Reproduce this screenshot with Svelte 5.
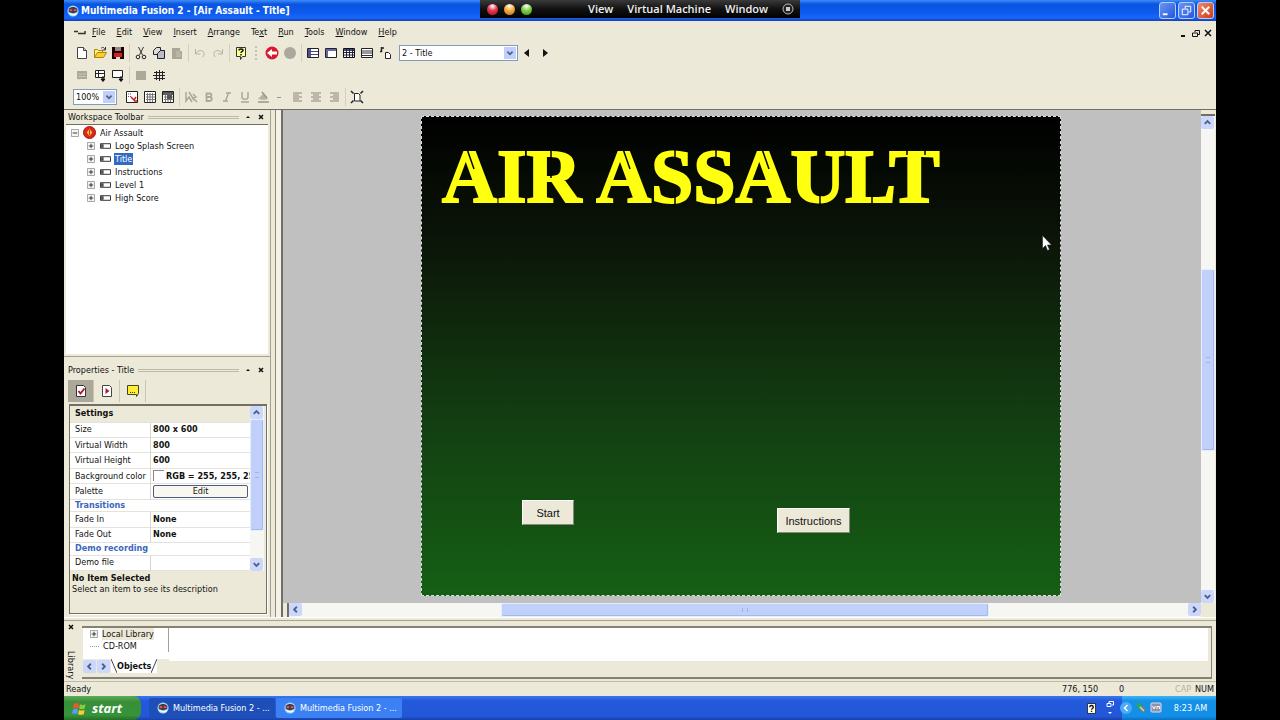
<script>
    let frameChoice = $state("2 - Title")
    let zoom = $state("100%")
    let selected = $state("Title")

    const menus = [
        ["", "F", "ile"], ["", "E", "dit"], ["", "V", "iew"], ["", "I", "nsert"], ["", "A", "rrange"],
        ["Te", "x", "t"], ["", "R", "un"], ["", "T", "ools"], ["", "W", "indow"], ["", "H", "elp"],
    ]

    const frames = ["Logo Splash Screen", "Title", "Instructions", "Level 1", "High Score"]

    // svg bodies, all drawn on a 14 x 14 grid
    const icons = {
        new: `<path d="M2.5 1.5h6l3 3v8h-9z" fill="#fff" stroke="#444"/><path d="M8.500 1.500v3h3" fill="#ccd" stroke="#444"/>`,
        open: `<path d="M1.500 11.500v-8h3l1 1h4v2" fill="#fe8" stroke="#a80"/><path d="M1.500 11.500l3-5h9l-3 5z" fill="#fc3" stroke="#a80"/><path d="M8 2.500c2-2 3-1 4 1M12.500 1v3h-3" fill="none" stroke="#333"/>`,
        save: `<path d="M1 1h12v12H1z" fill="#200"/><path d="M3 7h8v4H3z" fill="#c22"/><path d="M4 1h6v4H4z" fill="#988"/><path d="M5 11h4v2H5z" fill="#ddd"/>`,
        cut: `<path d="M4.500 1l4 8M9.500 1l-4 8" fill="none" stroke="#333"/><circle cx="4" cy="11" r="1.800" fill="none" stroke="#222"/><circle cx="10" cy="11" r="1.800" fill="none" stroke="#222"/>`,
        copy: `<path d="M1.500 4.500l3-3h4v7h-7z" fill="#ddd" stroke="#222"/><path d="M5.500 7.500l3-3h4v8h-7z" fill="#bbc" stroke="#222"/>`,
        paste: `<path d="M2 2h8v3h2v8H2z" fill="#a8a798"/><path d="M6 6h4M6 8h5M6 10h5" stroke="#c8c6b5"/>`,
        undo: `<path d="M2.500 3v5h5M3 7c3-4 9-3 8 2l-1 2" fill="none" stroke="#b6b4a4"/>`,
        redo: `<path d="M11.500 3v5h-5M11 7c-3-4-9-3-8 2l1 2" fill="none" stroke="#b6b4a4"/>`,
        help: `<path d="M2.500 1.500h9v9h-3l-2 3v-3h-4z" fill="#ff9" stroke="#333"/><path d="M5 4.500c0-2 4-2 4 0 0 1-2 1-2 2.500M7 8v1.500" fill="none" stroke="#111" stroke-width="1.500"/>`,
        back: `<circle cx="7" cy="7" r="6.500" fill="#d8192d"/><path d="M2 7l5-4v2.500h5v3H7V11z" fill="#fff"/>`,
        stop: `<circle cx="7" cy="7" r="6" fill="#aaa99c"/>`,
        story: `<path d="M1.500 2.500h11v9h-11z" fill="#fff" stroke="#222"/><path d="M2 3h3v8H2z" fill="#559"/><path d="M2 5.500h10M2 8.500h10" stroke="#448"/>`,
        frame: `<path d="M1.500 2.500h11v9h-11z" fill="#fff" stroke="#222"/><path d="M2 4h10M3 4v7" stroke="#66a" stroke-width="2"/>`,
        events: `<path d="M1.500 2.500h11v9h-11z" fill="#fff" stroke="#111"/><path d="M2 3h10v2H2z" fill="#448"/><path d="M2 6.500h10M2 9h10M4.500 3v8M7.500 3v8M10.500 3v8" stroke="#223"/>`,
        list: `<path d="M1.500 2.500h11v9h-11z" fill="#fff" stroke="#222"/><path d="M2 5h10M2 7h10M2 9.500h10" stroke="#333"/>`,
        data: `<path d="M3.500 1v5M3 2h3M2 5.500h2" fill="none" stroke="#222" stroke-width="1.500"/><path d="M7.500 6.500h3l2 2v4h-5z" fill="#fff" stroke="#222"/>`,
        prev: `<path d="M9 3v8L4 7z" fill="#111"/>`,
        next: `<path d="M5 3v8l5-4z" fill="#111"/>`,
        block: `<path d="M2 3h10v9H2z" fill="#aaa99a"/>`,
        dimlist: `<path d="M2 3h10v8H2z" fill="#aaa99a"/><path d="M4 11v1M3 6h8M3 8.500h8" stroke="#c8c6b5"/>`,
        insertrow: `<path d="M2.500 2.500h9v7h-9zM2.500 5.500h9M5.500 2.500v7" fill="#fff" stroke="#222"/><path d="M10 8v5M8 11h4l-2 2.500z" fill="#111" stroke="#111"/>`,
        insertbox: `<path d="M1.500 2.500h10v7h-10z" fill="#fff" stroke="#222"/><path d="M10 8v5M8 11h4l-2 2.500z" fill="#111" stroke="#111"/>`,
        grid: `<path d="M2 4.500h11M1 7.500h12M2 10.500h11M4.500 3v9M7.500 2v11M10.500 3v9" stroke="#222"/>`,
        snap: `<path d="M1.500 1.500h11v11h-11z" fill="#fff" stroke="#222"/><path d="M3 4h4M3 6.500h3" stroke="#555" stroke-dasharray="1 1"/><path d="M6 7l3 3 2-3M9 11h3" fill="none" stroke="#c22" stroke-width="1.500"/>`,
        gridon: `<path d="M1.500 1.500h11v11h-11z" fill="#fff" stroke="#222"/><path d="M3 4.500h9M3 7h9M3 9.500h9M4.500 3v9M7 3v9M9.500 3v9" stroke="#777"/>`,
        gridset: `<path d="M1.500 1.500h11v11h-11z" fill="#fff" stroke="#222"/><path d="M2 2h10v3H2z" fill="#555"/><path d="M3 7h9M3 9.500h9M4.500 3v9M7 3v9M9.500 3v9" stroke="#777"/><path d="M6 5h5v4H6z" fill="#555"/>`,
        font: `<path d="M2 2v9l3-4 3 5M5 2l5 8M9 4l3 3-3 1 4 4" fill="none" stroke="#aaa89a" stroke-width="1.500"/>`,
        bold: `<path d="M4.500 3.500h3c2.500 0 2.500 3 .5 3.500 3 .5 2 4-.5 4h-3zM4.500 7H8" fill="none" stroke="#aaa89a" stroke-width="1.800"/>`,
        italic: `<path d="M6 3h5M3 11h5M8.500 3l-3 8" fill="none" stroke="#aaa89a" stroke-width="1.500"/>`,
        underline: `<path d="M4 2v5c0 3 6 3 6 0V2M3 12h8" fill="none" stroke="#aaa89a" stroke-width="1.500"/>`,
        color: `<path d="M2 9l5-5 5 5-4 1z" fill="#b4b2a3"/><path d="M6 2l5 6M2 12h11" fill="none" stroke="#999789" stroke-width="1.500"/>`,
        left: `<path d="M2 3h9M2 5h6M2 7h9M2 9h6M2 11h9" stroke="#aaa89a" stroke-width="1.500"/>`,
        center: `<path d="M2 3h10M4 5h6M2 7h10M4 9h6M2 11h10" stroke="#aaa89a" stroke-width="1.500"/>`,
        right: `<path d="M3 3h9M6 5h6M3 7h9M6 9h6M3 11h9" stroke="#aaa89a" stroke-width="1.500"/>`,
        fit: `<path d="M4.500 3.500h4l1.500 1.500v6h-5.500z" fill="#fff" stroke="#222"/><path d="M1 1l2.500 2.500M13 1l-2.500 2.500M1 13l2.500-2.500M13 13l-2.500-2.500" stroke="#222" stroke-width="1.500"/>`,
        check: `<path d="M2.500 1.500h7l2 2v9h-9z" fill="#fff" stroke="#333"/><path d="M4.500 7l2 2.500 4-5" fill="none" stroke="#b0182b" stroke-width="2"/>`,
        run: `<path d="M2.500 1.500h7l2 2v9h-9z" fill="#fff" stroke="#444"/><path d="M5.500 4v6l4-3z" fill="#b0182b"/>`,
        note: `<path d="M1.500 1.500h11v8l-2 3v-2h-9z" fill="#ffee32" stroke="#443"/><path d="M4 8.500h6" stroke="#333" stroke-dasharray="1 1"/>`,
    }

    const row1 = [
        [["new", "New"], ["open", "Open"], ["save", "Save"]],
        [["cut", "Cut"], ["copy", "Copy"], ["paste", "Paste"]],
        [["undo", "Undo"], ["redo", "Redo"]],
        [["help", "Contents"]],
    ]
    const navigation = [
        [["back", "Back"], ["stop", "Stop"]],
        [["story", "Storyboard Editor"], ["frame", "Frame Editor"], ["events", "Event Editor"], ["list", "Event List Editor"], ["data", "Data Elements"]],
    ]
    const row2 = [
        [["dimlist", "Event"], ["insertrow", "Insert row"], ["insertbox", "Insert frame"]],
        [["block", "Color"], ["grid", "Grid"]],
    ]
    const row3 = [
        [["snap", "Grid setup"], ["gridon", "Show grid"], ["gridset", "Snap to grid"]],
        [["font", "Font"], ["bold", "Bold"], ["italic", "Italic"], ["underline", "Underline"], ["color", "Color"]],
    ]
    const align = [
        [["left", "Left"], ["center", "Center"], ["right", "Right"]],
        [["fit", "Center frame"]],
    ]

    const properties = [
        { name: "Size", value: "800 x 600" },
        { name: "Virtual Width", value: "800" },
        { name: "Virtual Height", value: "600" },
        { name: "Background color", value: "RGB = 255, 255, 255", swatch: true },
        { name: "Palette", button: "Edit" },
        { section: "Transitions" },
        { name: "Fade In", value: "None" },
        { name: "Fade Out", value: "None" },
        { section: "Demo recording" },
        { name: "Demo file", value: "" },
    ]
</script>

{#snippet icon(name)}
    <svg class="icon" viewBox="0 0 14 14" aria-hidden="true">{@html icons[name]}</svg>
{/snippet}

{#snippet tools(groups)}
    {#each groups as group}
        <div class="group">
            {#each group as [name, label]}
                <button class="tool" aria-label={label}>{@render icon(name)}</button>
            {/each}
        </div>
    {/each}
{/snippet}

{#snippet arrow(dir, label)}
    <button class="arrow" aria-label={label}>
        <svg class={dir} viewBox="0 0 12 12"><path d="M3 7.500l3-3 3 3" fill="none" stroke="#4d6185" stroke-width="2" /></svg>
    </button>
{/snippet}

{#snippet logo()}
    <svg class="logo" viewBox="0 0 14 14" aria-hidden="true">
        <circle cx="7" cy="7" r="6.500" fill="#9fd8f5" />
        <path d="M2 4.500c3-3 7-3 10 0v3.500c-3 2-7 2-10 0z" fill="#47384b" />
        <path d="M3 6h3M8 6h3" stroke="#e55" stroke-width="2" />
        <path d="M3 10c3 2 6 2 8 0" fill="none" stroke="#fff" stroke-width="1.500" />
    </svg>
{/snippet}

{#snippet plus(open)}
    <svg class="plus" viewBox="0 0 9 9" aria-hidden="true">
        <path d="M.5.500h8v8h-8z" fill="#f4f4f0" stroke="#999" />
        <path d={open ? "M2 4.500h5" : "M2 4.500h5M4.500 2v5"} stroke="#222" />
    </svg>
{/snippet}

{#snippet heading(text)}
    <div class="heading">
        <h2>{text}</h2>
        <span class="ridge"></span>
        <button aria-label="Collapse"><svg viewBox="0 0 8 8"><path d="M2 5l2-2 2 2z" fill="#111" /></svg></button>
        <button aria-label="Close"><svg viewBox="0 0 8 8"><path d="M2 2l4 4M6 2l-4 4" stroke="#111" stroke-width="1.500" /></svg></button>
    </div>
{/snippet}

<div class="desktop">
    <div class="vm">
        <span class="light red"></span>
        <span class="light amber"></span>
        <span class="light green"></span>
        <nav>
            <button>View</button>
            <button>Virtual Machine</button>
            <button>Window</button>
        </nav>
        <svg viewBox="0 0 12 12" aria-hidden="true">
            <circle cx="6" cy="6" r="5" fill="#222" stroke="#bbb" />
            <path d="M4 4h4v4H4z" fill="#ccc" />
        </svg>
    </div>

    <header class="titlebar">
        {@render logo()}
        <h1>Multimedia Fusion 2 - [Air Assault - Title]</h1>
        <button class="win" aria-label="Minimize"><svg viewBox="0 0 16 16"><path d="M3 12h5" stroke="#fff" stroke-width="2" /></svg></button>
        <button class="win" aria-label="Restore"><svg viewBox="0 0 16 16"><path d="M6.500 6V3.500h6v6H10M3.500 6.500h6v6h-6z" fill="none" stroke="#fff" /></svg></button>
        <button class="win close" aria-label="Close"><svg viewBox="0 0 16 16"><path d="M4 4l8 8M12 4l-8 8" stroke="#fff" stroke-width="2" /></svg></button>
    </header>

    <div class="bars">
        <nav class="menu">
            <svg class="doc" viewBox="0 0 14 10" aria-hidden="true"><path d="M1 4.500h4M5 6.500h7V4" fill="none" stroke="#333" stroke-width="1.500" /></svg>
            {#each menus as [before, key, after]}
                <button>{before}<u>{key}</u>{after}</button>
            {/each}
            <div class="mdi">
                <button aria-label="Minimize document"><svg viewBox="0 0 10 10"><path d="M2 8h4" stroke="#111" stroke-width="2" /></svg></button>
                <button aria-label="Restore document"><svg viewBox="0 0 10 10"><path d="M4 4V2.500h4.500v4H7M1.500 5h5v3.500h-5z" fill="none" stroke="#111" /></svg></button>
                <button aria-label="Close document"><svg viewBox="0 0 10 10"><path d="M2 2l6 6M8 2l-6 6" stroke="#111" stroke-width="1.500" /></svg></button>
            </div>
        </nav>
        <div class="toolbar">
            {@render tools(row1)}
            <span class="grip"></span>
            {@render tools(navigation)}
            <div class="combo wide">
                <select aria-label="Frame" bind:value={frameChoice}>
                    <option>2 - Title</option>
                </select>
                <svg viewBox="0 0 12 14" aria-hidden="true"><path d="M3 5.500l3 3 3-3" fill="none" stroke="#4d6185" stroke-width="2" /></svg>
            </div>
            <button class="tool" aria-label="Previous frame">{@render icon("prev")}</button>
            <button class="tool" aria-label="Next frame">{@render icon("next")}</button>
        </div>
        <div class="toolbar">
            {@render tools(row2)}
        </div>
        <div class="toolbar">
            <div class="combo">
                <select aria-label="Zoom" bind:value={zoom}>
                    <option>100%</option>
                </select>
                <svg viewBox="0 0 12 14" aria-hidden="true"><path d="M3 5.500l3 3 3-3" fill="none" stroke="#4d6185" stroke-width="2" /></svg>
            </div>
            {@render tools(row3)}
            <button class="more" aria-label="More colors"></button>
            {@render tools(align)}
        </div>
    </div>

    <main>
        <aside>
            <section class="workspace">
                {@render heading("Workspace Toolbar")}
                <div class="tree">
                    <div class="root">
                        {@render plus(true)}
                        <svg class="app" viewBox="0 0 14 14" aria-hidden="true">
                            <circle cx="7" cy="7" r="6.500" fill="#d42a1c" stroke="#a11" />
                            <path d="M7 3l3 4-3 4-3-4z" fill="#fb4" />
                            <path d="M7 4v6" stroke="#d42a1c" />
                        </svg>
                        <span>Air Assault</span>
                    </div>
                    {#each frames as frame}
                        <div class="node">
                            {@render plus(false)}
                            <svg class="film" viewBox="0 0 12 6" aria-hidden="true">
                                <path d="M.5.500h11v5H.5z" fill="#fff" stroke="#222" />
                                <path d="M1 1h3v4H1z" fill="#555" />
                            </svg>
                            <button class:selected={frame === selected} onclick={() => (selected = frame)}>{frame}</button>
                        </div>
                    {/each}
                </div>
            </section>

            <section class="properties">
                {@render heading("Properties - Title")}
                <div class="tabs">
                    <button class="active" aria-label="Settings">{@render icon("check")}</button>
                    <button aria-label="Runtime options">{@render icon("run")}</button>
                    <button aria-label="About">{@render icon("note")}</button>
                </div>
                <div class="sheet">
                    <div class="grid">
                        <table>
                            <colgroup>
                                <col class="names">
                                <col>
                            </colgroup>
                            <tbody>
                                <tr class="main"><th colspan="2">Settings</th></tr>
                                {#each properties as row}
                                    {#if row.section}
                                        <tr class="section"><th colspan="2">{row.section}</th></tr>
                                    {:else}
                                        <tr>
                                            <td>{row.name}</td>
                                            <td class="value">
                                                {#if row.button}
                                                    <button>{row.button}</button>
                                                {:else}
                                                    {#if row.swatch}<span class="swatch"></span>{/if}{row.value}
                                                {/if}
                                            </td>
                                        </tr>
                                    {/if}
                                {/each}
                            </tbody>
                        </table>
                        <div class="vscroll">
                            {@render arrow("up", "Scroll up")}
                            <span class="thumb"><i></i></span>
                            <span class="rest"></span>
                            {@render arrow("down", "Scroll down")}
                        </div>
                    </div>
                    <div class="info">
                        <strong>No Item Selected</strong>
                        <p>Select an item to see its description</p>
                    </div>
                </div>
            </section>
        </aside>

        <div class="editor">
            <div class="canvas">
                <div class="stage">
                    <h2>AIR ASSAULT</h2>
                    <!-- stencil cuts across the title -->
                    <svg class="cuts" viewBox="0 0 500 60" aria-hidden="true">
                        <path
                            d="M24 3l7 20M180 3l7 20M319 3l7 20M108 2v30M232 0v14M232 46v14M273 0v14M273 46v14M377 46v14M429 46v14M464 0v9M482 0v9"
                            fill="none"
                            stroke="#060804"
                            stroke-width="1.500"
                        />
                    </svg>
                    <button class="start">Start</button>
                    <button class="instructions">Instructions</button>
                    <svg class="cursor" viewBox="0 0 10 17" aria-hidden="true">
                        <path d="M.5.500v13l3-3 2 5 2-1-2-4.500h4z" fill="#fff" stroke="#222" stroke-width=".6" />
                    </svg>
                </div>
            </div>
            <div class="vscroll">
                <span class="split"></span>
                {@render arrow("up", "Scroll up")}
                <span class="rest"></span>
                <span class="thumb"><i></i></span>
                <span class="rest"></span>
                {@render arrow("down", "Scroll down")}
            </div>
            <div class="hscroll">
                <span class="split"></span>
                {@render arrow("left", "Scroll left")}
                <span class="rest"></span>
                <span class="thumb"><i></i></span>
                <span class="rest"></span>
                {@render arrow("right", "Scroll right")}
            </div>
        </div>
    </main>

    <section class="library">
        <div class="side">
            <button aria-label="Close library"><svg viewBox="0 0 8 8"><path d="M2 2l4 4M6 2l-4 4" stroke="#111" stroke-width="1.500" /></svg></button>
            <h2>Library</h2>
        </div>
        <div class="shelf">
            <div class="sources">
                <div class="source">{@render plus(false)}<span class="local">Local Library</span></div>
                <div class="source"><span class="twig"></span><span>CD-ROM</span></div>
                <div class="pages">
                    {@render arrow("left", "Previous tab")}
                    {@render arrow("right", "Next tab")}
                    <button class="page">
                        <svg viewBox="0 0 6 14" aria-hidden="true"><path d="M0 0l6 14" stroke="#444" /></svg>
                        Objects
                        <svg viewBox="0 0 6 14" aria-hidden="true"><path d="M6 0L0 14" stroke="#444" /></svg>
                    </button>
                </div>
            </div>
            <div class="objects"></div>
        </div>
    </section>

    <div class="status">
        <span class="ready">Ready</span>
        <span class="coords">776, 150</span>
        <span class="count">0</span>
        <span class="cap">CAP</span>
        <span>NUM</span>
    </div>

    <footer>
        <button class="begin">
            <svg viewBox="0 0 16 16" aria-hidden="true">
                <path d="M2 3c2-1 4-1 5.500 0L6.500 8C5 7 3 7 1 8z" fill="#f0572a" />
                <path d="M8.500 3.500c2 1 4 1 6 0L13.500 8c-2 1-4 1-6 0z" fill="#8c4" />
                <path d="M1 9c2-1 4-1 5.500 0l-1 5C4 13 2 13 0 14z" fill="#5a9cf8" />
                <path d="M7.500 9.500c2 1 4 1 6 0l-1 4.500c-2 1-4 1-6 0z" fill="#fc3" />
            </svg>
            start
        </button>
        <button class="task pressed">{@render logo()}Multimedia Fusion 2 - ...</button>
        <button class="task">{@render logo()}Multimedia Fusion 2 - ...</button>
        <div class="lang">
            <svg class="ask" viewBox="0 0 10 12" aria-hidden="true">
                <path d="M.5.500h9v11h-9z" fill="#ffe" stroke="#222" />
                <path d="M3 4.500c0-2.500 4-2.500 4 0 0 1.500-2 1.500-2 3M5 8.500v1.500" fill="none" stroke="#111" stroke-width="1.500" />
            </svg>
            <svg class="opts" viewBox="0 0 8 16" aria-hidden="true">
                <path d="M3 3V1.500h4.500V5H6M1 3.500h4v3H1z" fill="none" stroke="#fff" />
                <path d="M2 12h4l-2 2z" fill="#fff" />
            </svg>
        </div>
        <div class="tray">
            <button aria-label="Show hidden icons">
                <svg viewBox="0 0 12 12"><circle cx="6" cy="6" r="6" fill="#4ba9f5" /><path d="M7.500 3l-3 3 3 3" fill="none" stroke="#fff" stroke-width="1.500" /></svg>
            </button>
            <svg viewBox="0 0 12 12" aria-hidden="true"><path d="M1 2l4-1 2 4-2 3z" fill="#2fa84a" /><path d="M4 7l4-4 3 5-4 3z" fill="#6b7d86" /><path d="M5 5l4 4" stroke="#bfe5b8" stroke-width="1.500" /></svg>
            <svg viewBox="0 0 12 12" aria-hidden="true"><rect x="1" y="1" width="10" height="9" rx="1" fill="#8c93a6" stroke="#dde" /><path d="M2.500 4l1.500 3 1.500-3M7 7V4.500h2.500V7" fill="none" stroke="#fff" /></svg>
            <time>8:23 AM</time>
        </div>
    </footer>
</div>

<style>
    :global(body) {
        margin: 0;
        background: #000;
    }

    .desktop {
        position: relative;
        display: flex;
        flex-direction: column;
        min-height: 100vh;
        margin: 0 5%;
        background: #ece9d8;
        color: #111;
        font: 9px/12px "DejaVu Sans Condensed", "DejaVu Sans", sans-serif;
        white-space: nowrap;
    }

    button {
        margin: 0;
        padding: 0;
        border: 0;
        background: none;
        color: inherit;
        font: inherit;
        cursor: pointer;
    }

    h1,
    h2,
    p {
        margin: 0;
        font: inherit;
    }

    svg {
        display: block;
        flex: none;
    }

    /* virtual machine bar */

    .vm {
        position: absolute;
        z-index: 2;
        top: 0;
        left: 50%;
        display: flex;
        align-items: center;
        box-sizing: border-box;
        width: 320px;
        height: 18px;
        padding: 0 6px 0 7px;
        transform: translateX(-50%);
        background: linear-gradient(#3a3a3a, #111 50%, #000);
        color: #f0f0f0;
        font: 600 11px/18px "Open Sans", sans-serif;
    }

    .vm nav {
        display: flex;
        gap: 14px;
        margin: 0 14px 0 auto;
    }

    .vm svg {
        width: 12px;
        height: 12px;
    }

    .light {
        width: 11px;
        height: 11px;
        margin-right: 6px;
        border-radius: 50%;
    }

    .red {
        background: radial-gradient(circle at 50% 20%, #fff, #e8364c 45%, #a01028);
    }

    .amber {
        background: radial-gradient(circle at 50% 20%, #fff, #f3ae3c 45%, #b66a10);
    }

    .green {
        background: radial-gradient(circle at 50% 20%, #fff, #7fcf45 45%, #3b8a18);
    }

    /* title bar */

    .titlebar {
        display: flex;
        align-items: center;
        gap: 2px;
        height: 21px;
        padding: 0 2px 0 3px;
        background: linear-gradient(#3f8cf8, #0a54e0 20%, #0c5bee 60%, #1a66fb 85%, #1140ae);
        color: #fff;
    }

    .titlebar h1 {
        flex: 1;
        font: bold 10px/20px "DejaVu Sans Condensed", "DejaVu Sans", sans-serif;
    }

    .logo {
        width: 12px;
        height: 12px;
    }

    .win {
        width: 17px;
        height: 17px;
        box-sizing: border-box;
        border: 1px solid #b9cdf5;
        border-radius: 3px;
        background: linear-gradient(135deg, #6b96f5, #2257dd);
    }

    .win svg {
        width: 15px;
        height: 15px;
    }

    .win.close {
        background: linear-gradient(135deg, #f08a6c, #d03a18);
    }

    /* menu and toolbars */

    .bars {
        height: 88px;
        border-bottom: 1px solid #716f64;
    }

    .menu {
        display: flex;
        align-items: center;
        height: 21px;
        padding-left: 9px;
    }

    .menu > button {
        padding: 0 6px 0 5px;
    }

    .doc {
        width: 14px;
        height: 10px;
    }

    .mdi {
        display: flex;
        gap: 2px;
        margin: 2px 3px 0 auto;
    }

    .mdi svg {
        width: 10px;
        height: 10px;
    }

    .toolbar {
        display: flex;
        align-items: center;
        height: 22px;
        padding-left: 9px;
    }

    .group {
        display: flex;
        margin-right: 5px;
    }

    .group + .group::before {
        content: "";
        width: 1px;
        margin-left: -3px;
        margin-right: 2px;
        background: #d3d0bf;
    }

    .grip {
        width: 2px;
        height: 14px;
        margin-right: 4px;
        border-left: 2px dotted #c4c1af;
    }

    .tool {
        width: 18px;
        height: 18px;
        padding: 2px;
    }

    .more {
        width: 4px;
        height: 1px;
        margin-right: 8px;
        background: #999789;
    }

    .icon {
        width: 14px;
        height: 14px;
    }

    .combo {
        display: flex;
        align-items: center;
        box-sizing: border-box;
        width: 44px;
        height: 16px;
        margin-right: 6px;
        padding-right: 1px;
        border: 1px solid #7f9db9;
        background: #fff;
    }

    .combo.wide {
        width: 119px;
        margin-right: 0;
    }

    .combo select {
        flex: 1;
        min-width: 0;
        padding: 0 2px;
        border: 0;
        background: none;
        color: inherit;
        font: inherit;
        appearance: none;
    }

    .combo svg {
        width: 12px;
        height: 12px;
        background: #c1d0fb;
        pointer-events: none;
    }

    /* left column */

    main {
        display: flex;
        flex: 1;
    }

    aside {
        display: flex;
        flex-direction: column;
        box-sizing: border-box;
        width: 219px;
        padding-right: 5px;
        border-right: 2px solid #716f64;
        box-shadow: inset -5px 0 #f4f2e8, inset -6px 0 #8b8979;
    }

    .workspace,
    .properties {
        display: flex;
        flex-direction: column;
        margin-right: 5px;
        border-right: 1px solid #a5a28f;
    }

    .workspace {
        flex: 1;
        padding-bottom: 2px;
        border-bottom: 1px solid #a5a28f;
    }

    .heading {
        display: flex;
        align-items: center;
        height: 14px;
        padding: 0 5px 0 4px;
    }

    .heading button {
        margin-left: 5px;
    }

    .heading svg {
        width: 8px;
        height: 8px;
    }

    .ridge {
        flex: 1;
        height: 1px;
        margin-left: 4px;
        border: 1px solid #bdbaa8;
        border-width: 1px 0;
    }

    .tree {
        flex: 1;
        margin: 0 2px;
        padding: 1px 0 0 5px;
        border-top: 1px solid #716f64;
        background: #fff;
    }

    .root,
    .node {
        display: flex;
        align-items: center;
        height: 13px;
    }

    .root {
        gap: 4px;
    }

    .node {
        gap: 5px;
        padding-left: 16px;
    }

    .node button {
        padding: 0 1px;
    }

    .node button.selected {
        background: #316ac5;
        color: #fff;
    }

    .plus {
        width: 8px;
        height: 8px;
    }

    .app {
        width: 13px;
        height: 13px;
    }

    .film {
        width: 11px;
        height: 6px;
        margin-right: -2px;
    }

    .properties {
        padding: 6px 0 3px;
    }

    .tabs {
        display: flex;
        height: 22px;
        margin: 3px 5px 2px 4px;
    }

    .tabs button {
        display: flex;
        align-items: center;
        justify-content: center;
        width: 26px;
        border-right: 1px solid #c8c5b2;
    }

    .tabs .active {
        background: #aca899;
    }

    .sheet {
        margin: 0 3px 0 5px;
        border: 1px solid #716f64;
        border-top-width: 2px;
        box-shadow: 1px 1px #fff;
    }

    .grid {
        display: flex;
        height: 165px;
        overflow: hidden;
    }

    table {
        width: 180px;
        border-spacing: 0;
        table-layout: fixed;
        background: #fff;
    }

    .names {
        width: 80px;
    }

    td,
    th {
        box-sizing: border-box;
        height: 15px;
        padding: 0 0 0 5px;
        overflow: hidden;
        border-bottom: 1px solid #e4e2da;
        text-align: left;
        line-height: 13px;
    }

    th,
    .value,
    strong {
        font-weight: bold;
    }

    .main th {
        height: 16px;
        background: #ece9d8;
    }

    .section th {
        height: 12px;
        color: #3c67bd;
        line-height: 11px;
    }

    .value {
        padding-left: 2px;
        border-left: 1px solid #d8d5c8;
    }

    .value button {
        display: block;
        box-sizing: border-box;
        width: 95px;
        height: 13px;
        border: 1px solid #44607c;
        border-radius: 2px;
        background: #f8f7f1;
        font-weight: normal;
        line-height: 11px;
    }

    .swatch {
        display: inline-block;
        width: 10px;
        height: 10px;
        margin-right: 2px;
        border: 1px solid #888;
        border-width: 1px 0 0 1px;
        vertical-align: top;
    }

    .info {
        height: 40px;
        padding: 2px 2px 0;
        line-height: 11px;
    }

    /* scroll bars */

    .vscroll,
    .hscroll {
        display: flex;
        background: #f6f6f2;
    }

    .vscroll {
        flex-direction: column;
        width: 14px;
    }

    .hscroll {
        height: 14px;
    }

    .arrow {
        display: flex;
        align-items: center;
        justify-content: center;
        width: 13px;
        height: 13px;
        border-radius: 2px;
        background: #cbd8fc;
    }

    .arrow svg {
        width: 11px;
        height: 11px;
    }

    .down {
        transform: rotate(180deg);
    }

    .left {
        transform: rotate(-90deg);
    }

    .right {
        transform: rotate(90deg);
    }

    .thumb {
        display: flex;
        align-items: center;
        justify-content: center;
        box-sizing: border-box;
        border: 1px solid #e6edff;
        border-radius: 2px;
        background: #c0d0fb;
        box-shadow: inset -1px -1px #a4b8ea;
    }

    .grid .thumb {
        flex: 112;
    }

    .grid .rest {
        flex: 27;
    }

    .thumb i {
        width: 4px;
        height: 4px;
        border: 1px solid #9db3ee;
        border-width: 1px 0;
    }

    .hscroll .thumb i {
        border-width: 0 1px;
    }

    /* frame editor */

    .editor {
        display: grid;
        flex: 1;
        grid-template-columns: 1fr 14px;
        grid-template-rows: 1fr 14px;
        padding-right: 1px;
    }

    .canvas {
        display: flex;
        justify-content: center;
        padding: 6px 2px 6px 0;
        background: #c0c0c0;
    }

    .stage {
        position: relative;
        box-sizing: border-box;
        width: 640px;
        height: 480px;
        padding: 18px 21px;
        outline: 1px dashed #ddd;
        outline-offset: -1px;
        background: linear-gradient(#000, #0b1408 25%, #134012 65%, #155f14);
    }

    .stage h2 {
        color: #ffff10;
        font: bold 76px/84px "Liberation Serif", serif;
        -webkit-text-stroke: 2px #ffff10;
    }

    .cuts {
        position: absolute;
        top: 30px;
        left: 22px;
        width: 500px;
        height: 60px;
    }

    .stage button {
        position: absolute;
        height: 25px;
        border: 1px solid;
        border-color: #fff #8a887a #8a887a #fff;
        background: #ece9d8;
        font: 11px/22px "Liberation Sans", sans-serif;
    }

    .start {
        top: 384px;
        left: 101px;
        width: 52px;
    }

    .instructions {
        top: 392px;
        left: 356px;
        width: 73px;
    }

    .cursor {
        position: absolute;
        top: 119px;
        left: 621px;
        width: 10px;
        height: 17px;
    }

    .editor .vscroll .rest {
        flex: 141;
    }

    .editor .vscroll .thumb {
        flex: 180;
    }

    .editor .vscroll .rest:nth-child(5) {
        flex: 140;
    }

    .editor .hscroll .rest {
        flex: 200;
    }

    .editor .hscroll .thumb {
        flex: 487;
    }

    .vscroll .split {
        height: 4px;
        border-bottom: 2px solid #716f64;
        background: #ece9d8;
    }

    .hscroll .split {
        width: 4px;
        border-right: 2px solid #716f64;
        background: #ece9d8;
    }

    /* library */

    .library {
        display: flex;
        height: 59px;
        padding: 2px 4px 2px 0;
        border-top: 1px solid #fff;
        box-shadow: inset 0 2px #ece9d8, inset 0 3px #a5a28f;
    }

    .side {
        display: flex;
        flex-direction: column;
        align-items: center;
        width: 14px;
        margin-right: 4px;
        padding-top: 3px;
    }

    .side svg {
        width: 8px;
        height: 8px;
    }

    .side h2 {
        margin-top: auto;
        line-height: 12px;
        writing-mode: vertical-rl;
    }

    .shelf {
        display: flex;
        flex: 1;
        margin-top: 6px;
        padding: 0 3px 0 1px;
        border: 2px solid #858273;
        border-width: 2px 1px 2px 0;
    }

    .sources {
        display: flex;
        flex-direction: column;
        width: 85px;
        border-right: 1px solid #a5a28f;
        background: #fff;
    }

    .source {
        display: flex;
        align-items: center;
        gap: 4px;
        padding-left: 7px;
    }

    .local {
        background: #ece9d8;
    }

    .twig {
        width: 9px;
        border-top: 1px dotted #999;
    }

    .pages {
        display: flex;
        flex: 1;
        align-items: center;
        gap: 1px;
        margin-right: -1px;
        padding-top: 3px;
        background: linear-gradient(#fff 7px, #ece9d8 7px);
    }

    .page {
        display: flex;
        align-items: center;
        background: #fff;
        font-weight: bold;
    }

    .page svg {
        width: 6px;
        height: 14px;
    }

    .objects {
        flex: 1;
        height: 33px;
        background: #fff;
    }

    /* status bar and task bar */

    .status {
        display: flex;
        align-items: center;
        height: 14px;
        padding: 0 2px;
        border-top: 1px solid #bdbaa8;
    }

    .coords {
        width: 57px;
        margin-left: auto;
    }

    .count {
        width: 56px;
    }

    .cap {
        width: 20px;
        color: #b5b2a2;
    }

    footer {
        display: flex;
        align-items: center;
        height: 24px;
        background: linear-gradient(#3b78f0, #2459dc 20%, #2357d8 85%, #1941a5);
        color: #fff;
    }

    .begin {
        display: flex;
        align-items: center;
        gap: 5px;
        width: 77px;
        height: 24px;
        margin-right: 8px;
        padding-left: 8px;
        border-radius: 0 8px 8px 0;
        background: linear-gradient(#5eac56, #388e37 25%, #37943a 80%, #256e27);
        font: italic bold 13px/22px "Open Sans", sans-serif;
    }

    .begin svg {
        width: 15px;
        height: 15px;
    }

    .task {
        display: flex;
        align-items: center;
        gap: 4px;
        width: 126px;
        height: 20px;
        margin-right: 1px;
        padding-left: 8px;
        border-radius: 2px;
        background: #3c81f3;
    }

    .task.pressed {
        background: #1e4fb8;
    }

    .lang {
        display: flex;
        align-items: center;
        gap: 10px;
        margin: 0 8px 0 auto;
    }

    .ask {
        width: 9px;
        height: 11px;
    }

    .opts {
        width: 8px;
        height: 16px;
    }

    .tray {
        display: flex;
        align-items: center;
        gap: 3px;
        box-sizing: border-box;
        width: 94px;
        height: 24px;
        background: linear-gradient(#3fb4f3, #1590e6 20%, #128fe8 85%, #0f6fc0);
    }

    .tray > button {
        margin-left: -2px;
    }

    .tray svg {
        width: 12px;
        height: 12px;
    }

    .tray time {
        margin: 0 auto;
    }
</style>
